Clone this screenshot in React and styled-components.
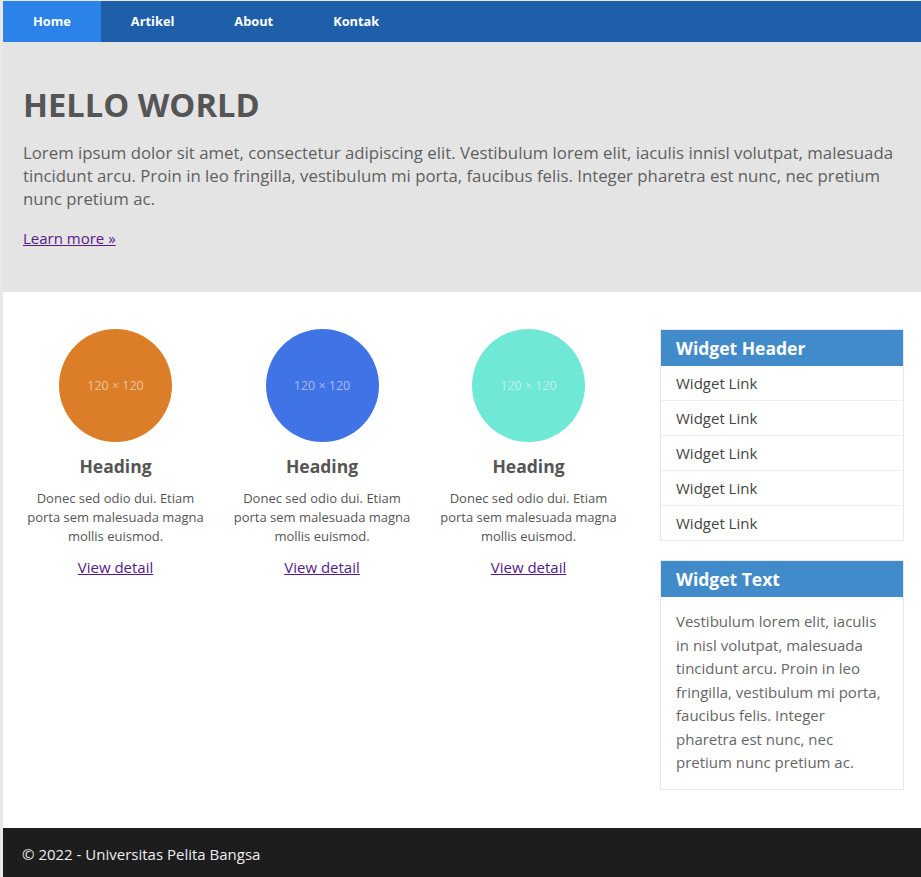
import React from "react"
import styled, { createGlobalStyle } from "styled-components"

const GlobalStyle = createGlobalStyle`
  html, body {
    margin: 0;
    padding: 0;
    background: #e8e8e8;
    font-family: "Open Sans", "Liberation Sans", sans-serif;
  }
`

const navItems = ["Home", "Artikel", "About", "Kontak"]

const cards = [
  { color: "#db7e27" },
  { color: "#3f73e6" },
  { color: "#70e8d6" },
]

const links = ["Widget Link", "Widget Link", "Widget Link", "Widget Link", "Widget Link"]

const App = () => {
  return (
    <>
      <GlobalStyle />
      <Container>
        <Nav>
          {navItems.map((item, i) => (
            <NavLink key={item} href="#" $active={i === 0}>
              {item}
            </NavLink>
          ))}
        </Nav>
        <Hero>
          <HeroTitle>HELLO WORLD</HeroTitle>
          <HeroText>
            Lorem ipsum dolor sit amet, consectetur adipiscing elit. Vestibulum lorem elit, iaculis innisl
            volutpat, malesuada tincidunt arcu. Proin in leo fringilla, vestibulum mi porta, faucibus felis.
            Integer pharetra est nunc, nec pretium nunc pretium ac.
          </HeroText>
          <MoreLine>
            <TextLink href="#">Learn more &raquo;</TextLink>
          </MoreLine>
        </Hero>
        <Main>
          <Cards>
            {cards.map((card, i) => (
              <Card key={i}>
                <Thumb $color={card.color}>120 × 120</Thumb>
                <CardTitle>Heading</CardTitle>
                <CardText>Donec sed odio dui. Etiam porta sem malesuada magna mollis euismod.</CardText>
                <DetailLink href="#">View detail</DetailLink>
              </Card>
            ))}
          </Cards>
          <Sidebar>
            <Widget>
              <WidgetHeader>Widget Header</WidgetHeader>
              <WidgetList>
                {links.map((l, i) => (
                  <WidgetItem key={i}>
                    <WidgetLink href="#">{l}</WidgetLink>
                  </WidgetItem>
                ))}
              </WidgetList>
            </Widget>
            <Widget>
              <WidgetHeader>Widget Text</WidgetHeader>
              <WidgetBody>
                Vestibulum lorem elit, iaculis in nisl volutpat, malesuada tincidunt arcu. Proin in leo
                fringilla, vestibulum mi porta, faucibus felis. Integer pharetra est nunc, nec pretium nunc
                pretium ac.
              </WidgetBody>
            </Widget>
          </Sidebar>
        </Main>
        <Footer>© 2022 - Universitas Pelita Bangsa</Footer>
      </Container>
    </>
  )
}

export default App

const Container = styled.div`
  margin: 1px 0 0 3px;
  background: #fff;
`

const Nav = styled.nav`
  display: flex;
  height: 41px;
  background: #1f5faa;
`

const NavLink = styled.a`
  display: block;
  padding: 0 30px;
  line-height: 41px;
  font-size: 12.8px;
  font-weight: 700;
  color: #fff;
  text-decoration: none;
  background: ${props => (props.$active ? "#2b83ea" : "transparent")};
`

const Hero = styled.header`
  background: #e4e4e4;
  padding: 40px 20px 43px;
  color: #555;
`

const HeroTitle = styled.h1`
  margin: 0;
  font-size: 32.7px;
  font-weight: 700;
  line-height: normal;
`

const HeroText = styled.p`
  margin: 14px 0 0;
  font-size: 16.8px;
  line-height: 23px;
  color: #5f5f5f;
`

const MoreLine = styled.p`
  margin: 18px 0 0;
  font-size: 15px;
  line-height: 21px;
`

const TextLink = styled.a`
  color: #551a8b;
`

const Main = styled.main`
  display: flex;
  align-items: flex-start;
  padding: 37px 17px 38px 20px;
`

const Cards = styled.div`
  display: grid;
  grid-template-columns: repeat(3, 185px);
  column-gap: 21.5px;
`

const Card = styled.div`
  display: flex;
  flex-direction: column;
  align-items: center;
  text-align: center;
  color: #555;
`

const Thumb = styled.div`
  width: 113px;
  height: 113px;
  border-radius: 50%;
  background: ${props => props.$color};
  color: rgba(255, 255, 255, 0.55);
  font-size: 12.5px;
  display: flex;
  align-items: center;
  justify-content: center;
`

const CardTitle = styled.h2`
  margin: 12px 0 0;
  font-size: 17.5px;
  font-weight: 700;
  line-height: normal;
`

const CardText = styled.p`
  margin: 11px 0 0;
  font-size: 13px;
  line-height: 19px;
`

const DetailLink = styled.a`
  margin-top: 11px;
  font-size: 15px;
  color: #551a8b;
`

const Sidebar = styled.aside`
  margin-left: auto;
  width: 244px;
  display: flex;
  flex-direction: column;
  gap: 19px;
`

const Widget = styled.section`
  border: 1px solid #e8e8e8;
  background: #fff;
`

const WidgetHeader = styled.h3`
  margin: 0;
  padding: 6px 15px;
  background: #428bca;
  color: #fff;
  font-size: 17.5px;
  font-weight: 700;
  line-height: 24px;
`

const WidgetList = styled.ul`
  list-style: none;
  margin: 0;
  padding: 0;
`

const WidgetItem = styled.li`
  border-bottom: 1px solid #eee;
  padding: 7px 15px;
  font-size: 15px;
  line-height: 20px;

  &:last-child {
    border-bottom: none;
  }
`

const WidgetLink = styled.a`
  color: #444;
  text-decoration: none;
`

const WidgetBody = styled.p`
  margin: 0;
  padding: 13px 15px 14px;
  font-size: 15px;
  line-height: 23.5px;
  color: #666;
`

const Footer = styled.footer`
  background: #1d1d1d;
  color: #eee;
  font-size: 15px;
  padding: 16px 19px 26px;
`
